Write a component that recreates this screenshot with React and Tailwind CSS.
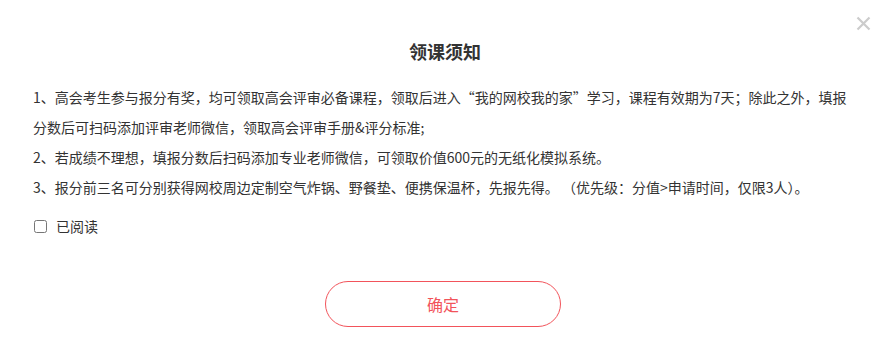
import { useState } from "react";

const App = () => {
  const [read, setRead] = useState(false);

  return (
    <div
      className="relative w-[890px] h-[354px] bg-white text-[#333]"
      style={{ fontFamily: '"Microsoft YaHei", "Noto Sans CJK SC", sans-serif' }}
    >
      {/* CLOSE */}
      <button className="absolute right-[19px] top-[16px] w-[15px] h-[15px] text-[#ccc]">
        <svg viewBox="0 0 15 15" className="w-full h-full" fill="none" stroke="currentColor" strokeWidth="2.2">
          <path d="M1.5 1.5L13.5 13.5M13.5 1.5L1.5 13.5" />
        </svg>
      </button>

      <div className="px-[33px] pt-[39px]">
        <h2 className="text-center text-[18px] leading-[24px] font-bold">领课须知</h2>

        <div className="mt-[19px] text-[14px] leading-[30px]">
          <p>
            1、高会考生参与报分有奖，均可领取高会评审必备课程，领取后进入“我的网校我的家”学习，课程有效期为7天；除此之外，填报分数后可扫码添加评审老师微信，领取高会评审手册&amp;评分标准;
          </p>
          <p>2、若成绩不理想，填报分数后扫码添加专业老师微信，可领取价值600元的无纸化模拟系统。</p>
          <p>3、报分前三名可分别获得网校周边定制空气炸锅、野餐垫、便携保温杯，先报先得。 （优先级：分值&gt;申请时间，仅限3人）。</p>
        </div>

        {/* READ CHECKBOX */}
        <label className="mt-[14px] flex items-center gap-[9px] text-[14px] leading-[20px] cursor-pointer">
          <input
            type="checkbox"
            checked={read}
            onChange={() => setRead(!read)}
            className="ml-[1px] w-[13px] h-[13px]"
          />
          <span>已阅读</span>
        </label>

        <div className="mt-[45px] flex justify-center pr-[4px]">
          <button className="w-[236px] h-[46px] rounded-full border border-[#f2545b] text-[#f2545b] text-[16px]">
            确定
          </button>
        </div>
      </div>
    </div>
  );
};

export default App;
